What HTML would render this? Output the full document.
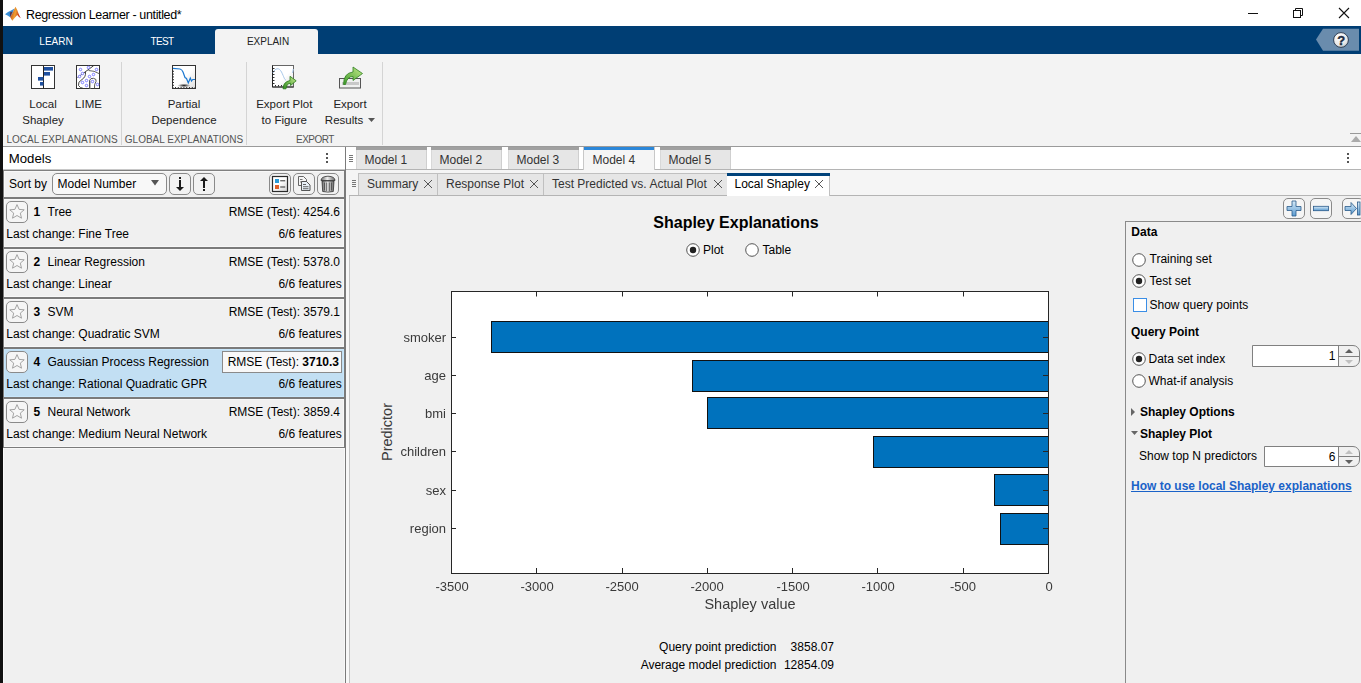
<!DOCTYPE html>
<html><head><meta charset="utf-8"><style>
html,body{margin:0;padding:0;width:1361px;height:683px;overflow:hidden;background:#f0f0f0;position:relative;}
body{font-family:"Liberation Sans",sans-serif;}
.a{position:absolute;display:block;}
.t{position:absolute;white-space:nowrap;font-family:"Liberation Sans",sans-serif;}
svg{overflow:visible}
</style></head><body>
<div class="a" style="left:0px;top:0px;width:1361px;height:26px;background:#fff"></div>
<svg class="a" style="left:0px;top:0px;" width="26" height="24" viewBox="0 0 26 24"><defs><linearGradient id="mlg" x1="0" y1="0" x2="1" y2="0.3"><stop offset="0" stop-color="#b0301a"/><stop offset="0.55" stop-color="#f0a030"/><stop offset="1" stop-color="#c02818"/></linearGradient></defs><path d="M5 14.3 Q8 11.5 11 10.5 Q13 9.5 14.5 8.6 L12.5 13.5 L10.2 17.3 Q7.5 15.5 5 14.3 Z" fill="#3a90d8"/><path d="M10.2 17.3 L13 12 L15.5 6.8 Q17.5 10 18.5 13.5 Q19.5 16 20.8 18.2 Q18.5 16.8 17.2 15 Q14.5 18 12.3 20.7 Z" fill="url(#mlg)"/><path d="M9.8 12.5 L12.5 11.5 L10.2 17.3 Z" fill="#6a1a20" opacity="0.8"/></svg>
<div class="t" style="left:26px;top:8px;font-size:12.5px;line-height:14px;color:#000;letter-spacing:-0.36px;">Regression Learner - untitled*</div>
<div class="a" style="left:1248px;top:13px;width:10px;height:1px;background:#111"></div>
<svg class="a" style="left:1292px;top:7px;" width="13" height="12" viewBox="0 0 13 12"><rect x="1.5" y="3.5" width="7" height="7" fill="none" stroke="#111" stroke-width="1"/><path d="M3.5 3.5 V1.5 H10.5 V8.5 H8.5" fill="none" stroke="#111" stroke-width="1"/></svg>
<svg class="a" style="left:1338px;top:7px;" width="12" height="12" viewBox="0 0 12 12"><path d="M1 1 L11 11 M11 1 L1 11" stroke="#111" stroke-width="1.1"/></svg>
<div class="a" style="left:0px;top:26px;width:1361px;height:28px;background:#003e74"></div>
<div class="t" style="left:56px;top:36px;font-size:10px;line-height:11px;color:#fff;transform:translateX(-50%);">LEARN</div>
<div class="t" style="left:162px;top:36px;font-size:10px;line-height:11px;color:#fff;transform:translateX(-50%);letter-spacing:-0.6px;">TEST</div>
<div class="a" style="left:215px;top:29px;width:103px;height:25px;background:#f3f3f3;border-radius:3px 3px 0 0"></div>
<div class="t" style="left:268px;top:36px;font-size:10px;line-height:11px;color:#222;transform:translateX(-50%);">EXPLAIN</div>
<svg class="a" style="left:1315px;top:28px;" width="46" height="23" viewBox="0 0 46 23"><path d="M1 11.5 L8 0.8 H44 V22.8 H8 Z" fill="#6a8cad"/><defs><radialGradient id="hg" cx="0.4" cy="0.3" r="0.8"><stop offset="0" stop-color="#fff"/><stop offset="0.7" stop-color="#e6e6e6"/><stop offset="1" stop-color="#9aa"/></radialGradient></defs><circle cx="26" cy="12" r="7.4" fill="url(#hg)" stroke="#22324a" stroke-width="0.9"/><text x="26.2" y="16.6" text-anchor="middle" font-family="Liberation Sans" font-weight="bold" font-size="13" fill="#1f2d40" stroke="#1f2d40" stroke-width="0.4">?</text></svg>
<div class="a" style="left:0px;top:54px;width:1361px;height:92px;background:#f3f3f3"></div>
<div class="a" style="left:0px;top:146px;width:1361px;height:1px;background:#9a9a9a"></div>
<div class="a" style="left:121px;top:62px;width:1px;height:83px;background:#d4d4d4"></div>
<div class="a" style="left:246px;top:62px;width:1px;height:83px;background:#d4d4d4"></div>
<div class="a" style="left:382px;top:62px;width:1px;height:83px;background:#d4d4d4"></div>
<svg class="a" style="left:31px;top:65px;" width="24" height="24" viewBox="0 0 24 24"><rect x="0.5" y="0.5" width="23" height="23" fill="#fff" stroke="#333"/><line x1="12.5" y1="0.5" x2="12.5" y2="23.5" stroke="#222"/><rect x="13" y="2" width="9" height="3.6" fill="#1f50a0"/><rect x="13" y="7" width="6" height="3.6" fill="#1f50a0"/><rect x="7" y="12" width="5.5" height="3.6" fill="#1f50a0"/><rect x="9" y="17" width="3.5" height="3.6" fill="#1f50a0"/></svg>
<svg class="a" style="left:76px;top:65px;" width="24" height="24" viewBox="0 0 24 24"><rect x="0.5" y="0.5" width="23" height="23" fill="#fff" stroke="#333"/><path d="M1.5 12.5 L17.5 0.8" stroke="#2a2a2a" stroke-width="0.9" fill="none"/><path d="M12.5 5.5 Q18 5.5 23.5 8.8" stroke="#555" stroke-width="0.9" fill="none"/><path d="M9.5 7 Q10 12 6 14.5 Q1.5 17 2.5 20.5 Q4 23 7.5 23.5" stroke="#333" stroke-width="0.9" fill="none"/><path d="M14 23.5 V15.5" stroke="#aaa" stroke-width="1.6" fill="none"/><path d="M13.5 23.5 V15.5 Q14.5 12.8 17.5 13.3 Q21 14 20 16.5 Q18 19 18.5 23.5" stroke="#444" stroke-width="0.9" fill="none"/><circle cx="4.5" cy="4.5" r="1.25" fill="#fff" stroke="#7070ff" stroke-width="0.9"/><circle cx="12.5" cy="2.5" r="1.25" fill="#fff" stroke="#7070ff" stroke-width="0.9"/><circle cx="20.5" cy="4.5" r="1.25" fill="#fff" stroke="#7070ff" stroke-width="0.9"/><circle cx="6.5" cy="8.5" r="1.25" fill="#fff" stroke="#7070ff" stroke-width="0.9"/><circle cx="3.5" cy="11.5" r="1.25" fill="#fff" stroke="#7070ff" stroke-width="0.9"/><circle cx="17.5" cy="9.5" r="1.25" fill="#fff" stroke="#7070ff" stroke-width="0.9"/><circle cx="13.5" cy="11.5" r="1.25" fill="#fff" stroke="#7070ff" stroke-width="0.9"/><circle cx="10.5" cy="15.5" r="1.25" fill="#fff" stroke="#7070ff" stroke-width="0.9"/><circle cx="16.5" cy="16.5" r="1.25" fill="#fff" stroke="#7070ff" stroke-width="0.9"/><circle cx="6.5" cy="17.5" r="1.25" fill="#fff" stroke="#7070ff" stroke-width="0.9"/><circle cx="10.5" cy="20.5" r="1.25" fill="#fff" stroke="#7070ff" stroke-width="0.9"/><circle cx="21.5" cy="19.5" r="1.25" fill="#fff" stroke="#7070ff" stroke-width="0.9"/></svg>
<svg class="a" style="left:172px;top:65px;" width="24" height="24" viewBox="0 0 24 24"><defs><linearGradient id="pdg" x1="0" y1="0" x2="1" y2="1"><stop offset="0.5" stop-color="#fff"/><stop offset="1" stop-color="#ddd"/></linearGradient></defs><rect x="0.5" y="0.5" width="23" height="23" fill="url(#pdg)" stroke="#333"/><defs><radialGradient id="pds" cx="0.5" cy="0.5" r="0.5"><stop offset="0" stop-color="#222"/><stop offset="1" stop-color="#222" stop-opacity="0"/></radialGradient></defs><ellipse cx="12" cy="20.5" rx="6.5" ry="1.8" fill="url(#pds)"/><rect x="1" y="3.0" width="1" height="1" fill="#333"/><rect x="3.0" y="22" width="1" height="1" fill="#333"/><rect x="1" y="5.8" width="1" height="1" fill="#333"/><rect x="5.8" y="22" width="1" height="1" fill="#333"/><rect x="1" y="8.6" width="1" height="1" fill="#333"/><rect x="8.6" y="22" width="1" height="1" fill="#333"/><rect x="1" y="11.4" width="1" height="1" fill="#333"/><rect x="11.4" y="22" width="1" height="1" fill="#333"/><rect x="1" y="14.2" width="1" height="1" fill="#333"/><rect x="14.2" y="22" width="1" height="1" fill="#333"/><rect x="1" y="17.0" width="1" height="1" fill="#333"/><rect x="17.0" y="22" width="1" height="1" fill="#333"/><rect x="1" y="19.8" width="1" height="1" fill="#333"/><rect x="19.8" y="22" width="1" height="1" fill="#333"/><rect x="1" y="22.6" width="1" height="1" fill="#333"/><rect x="22.6" y="22" width="1" height="1" fill="#333"/><path d="M1 3.3 L8 4 Q10 4.5 11 7 L13 12.5 L14.5 13.5 L16.3 18 L18.3 13 L19.5 16 L20.7 14.5 L23 14.5" fill="none" stroke="#1c78d0" stroke-width="1.2"/></svg>
<svg class="a" style="left:272px;top:65px;" width="25" height="25" viewBox="0 0 25 25"><defs><linearGradient id="epg" x1="0" y1="0" x2="1" y2="1"><stop offset="0.55" stop-color="#fff"/><stop offset="1" stop-color="#dcdcdc"/></linearGradient><linearGradient id="gr" x1="0" y1="1" x2="1" y2="0"><stop offset="0" stop-color="#2f8a1f"/><stop offset="1" stop-color="#c8ee90"/></linearGradient></defs><rect x="0.5" y="0.5" width="21" height="21.5" fill="url(#epg)" stroke="#666" stroke-width="1"/><path d="M0.5 0.5 V22 H21.5" fill="none" stroke="#222" stroke-width="1"/><path d="M1 8 C3 3, 7 2, 9.5 7 S 12.5 15, 14 15" fill="none" stroke="#a8c8ea" stroke-width="1"/><path d="M20.5 8 Q21 6 21.3 4" fill="none" stroke="#a8c8ea" stroke-width="1"/><rect x="1" y="3" width="1.5" height="1" fill="#333"/><rect x="1" y="6" width="1.5" height="1" fill="#333"/><rect x="1" y="9" width="1.5" height="1" fill="#333"/><rect x="1" y="12" width="1.5" height="1" fill="#333"/><rect x="1" y="15" width="1.5" height="1" fill="#333"/><rect x="1" y="18" width="1.5" height="1" fill="#333"/><rect x="3" y="20" width="1" height="1.5" fill="#333"/><rect x="6" y="20" width="1" height="1.5" fill="#333"/><rect x="9" y="20" width="1" height="1.5" fill="#333"/><rect x="12" y="20" width="1" height="1.5" fill="#333"/><path d="M11 23.8 Q11 17 18 15.5 L18 11.3 L24.2 15.8 L18.5 20.5 L18.5 18.2 Q14.5 18.5 14 23.8 Z" fill="url(#gr)" stroke="#2a7a1a" stroke-width="0.8"/></svg>
<svg class="a" style="left:339px;top:64px;" width="25" height="26" viewBox="0 0 25 26"><defs><linearGradient id="gr2" x1="0" y1="1" x2="1" y2="0"><stop offset="0" stop-color="#3d9a2a"/><stop offset="1" stop-color="#c5ea8a"/></linearGradient></defs><rect x="0.5" y="14.5" width="21" height="9.5" fill="#f0f0f0" stroke="#555"/><rect x="3" y="18" width="17" height="3" fill="#c8c8c8"/><path d="M4.5 20.5 Q4.5 9 14 8 L14 3 L23.5 9.5 L14 16.5 L14 12.5 Q8 12.5 6.5 20.5 Z" fill="url(#gr2)" stroke="#2f7f1f" stroke-width="0.8"/></svg>
<div class="t" style="left:43px;top:98px;font-size:11.5px;line-height:12px;color:#222;transform:translateX(-50%);">Local</div>
<div class="t" style="left:43px;top:114px;font-size:11.5px;line-height:12px;color:#222;transform:translateX(-50%);">Shapley</div>
<div class="t" style="left:88.5px;top:98px;font-size:11.5px;line-height:12px;color:#222;transform:translateX(-50%);">LIME</div>
<div class="t" style="left:184px;top:98px;font-size:11.5px;line-height:12px;color:#222;transform:translateX(-50%);">Partial</div>
<div class="t" style="left:184px;top:114px;font-size:11.5px;line-height:12px;color:#222;transform:translateX(-50%);">Dependence</div>
<div class="t" style="left:284.3px;top:98px;font-size:11.5px;line-height:12px;color:#222;transform:translateX(-50%);">Export Plot</div>
<div class="t" style="left:284.3px;top:114px;font-size:11.5px;line-height:12px;color:#222;transform:translateX(-50%);">to Figure</div>
<div class="t" style="left:350px;top:98px;font-size:11.5px;line-height:12px;color:#222;transform:translateX(-50%);">Export</div>
<div class="t" style="left:344px;top:114px;font-size:11.5px;line-height:12px;color:#222;transform:translateX(-50%);">Results</div>
<svg class="a" style="left:368px;top:118px;" width="8" height="5" viewBox="0 0 8 5"><path d="M0 0 H7 L3.5 4 Z" fill="#555"/></svg>
<div class="t" style="left:62px;top:134px;font-size:10px;line-height:11px;color:#555;transform:translateX(-50%);">LOCAL EXPLANATIONS</div>
<div class="t" style="left:184px;top:134px;font-size:10px;line-height:11px;color:#555;transform:translateX(-50%);">GLOBAL EXPLANATIONS</div>
<div class="t" style="left:315px;top:134px;font-size:10px;line-height:11px;color:#555;transform:translateX(-50%);letter-spacing:-0.5px;">EXPORT</div>
<div class="a" style="left:1350px;top:133px;width:11px;height:1px;background:#999"></div>
<svg class="a" style="left:1350px;top:135px;" width="11" height="7" viewBox="0 0 11 7"><path d="M1 7 L6 1 L11 7 Z" fill="#aaa"/></svg>
<div class="a" style="left:3px;top:147px;width:342px;height:22px;background:#fff"></div>
<div class="a" style="left:0px;top:147px;width:3px;height:536px;background:#111"></div>
<div class="a" style="left:0px;top:0px;width:3px;height:147px;background:#111"></div>
<div class="t" style="left:8.8px;top:151px;font-size:13.2px;line-height:15px;color:#000;">Models</div>
<div class="a" style="left:326px;top:153px;width:2.2px;height:2.2px;background:#555"></div>
<div class="a" style="left:326px;top:157px;width:2.2px;height:2.2px;background:#555"></div>
<div class="a" style="left:326px;top:161px;width:2.2px;height:2.2px;background:#555"></div>
<div class="a" style="left:3px;top:169px;width:342px;height:1px;background:#c8c8c8"></div>
<div class="a" style="left:3px;top:170px;width:342px;height:513px;background:#f0f0f0"></div>
<div class="a" style="left:3px;top:170px;width:342px;height:1px;background:#808080"></div>
<div class="a" style="left:4px;top:171px;width:340px;height:1px;background:#f8f8f8"></div>
<div class="a" style="left:4px;top:171px;width:1px;height:26px;background:#f8f8f8"></div>
<div class="a" style="left:3px;top:170px;width:1px;height:278px;background:#7b7b7b"></div>
<div class="a" style="left:3px;top:448px;width:1px;height:235px;background:#fafafa"></div>
<div class="a" style="left:344px;top:170px;width:1px;height:278px;background:#7b7b7b"></div>
<div class="a" style="left:344px;top:448px;width:1px;height:235px;background:#f8f8f8"></div>
<div class="a" style="left:4px;top:448px;width:340px;height:1px;background:#f8f8f8"></div>
<div class="a" style="left:345px;top:147px;width:1px;height:536px;background:#7b7b7b"></div>
<div class="t" style="left:9px;top:177px;font-size:12px;line-height:14px;color:#000;">Sort by</div>
<div class="a" style="left:52px;top:173px;width:115px;height:22px;background:#f8f8f8;border:1px solid #8a8a8a;border-radius:5px;box-sizing:border-box"></div>
<div class="t" style="left:57.5px;top:177px;font-size:12px;line-height:14px;color:#000;">Model Number</div>
<svg class="a" style="left:151px;top:180px;" width="8" height="6" viewBox="0 0 8 6"><path d="M0 0 H8 L4 5.5 Z" fill="#555"/></svg>
<div class="a" style="left:169px;top:173px;width:22px;height:22px;background:#f2f2f2;border:1px solid #8a8a8a;border-radius:5px;box-sizing:border-box"></div>
<div class="a" style="left:193px;top:173px;width:22px;height:22px;background:#f2f2f2;border:1px solid #8a8a8a;border-radius:5px;box-sizing:border-box"></div>
<svg class="a" style="left:169px;top:173px;" width="22" height="22" viewBox="0 0 22 22"><rect x="10" y="4" width="2" height="2" fill="#1a1a1a"/><rect x="10" y="7" width="2" height="8" fill="#1a1a1a"/><path d="M7 14 H15 L11 18 Z" fill="#1a1a1a"/></svg>
<svg class="a" style="left:193px;top:173px;" width="22" height="22" viewBox="0 0 22 22"><rect x="10" y="16" width="2" height="2" fill="#1a1a1a"/><rect x="10" y="7.5" width="2" height="7.5" fill="#1a1a1a"/><path d="M7 8 H15 L11 4 Z" fill="#1a1a1a"/></svg>
<div class="a" style="left:269px;top:173px;width:22px;height:22px;background:#f2f2f2;border:1px solid #8a8a8a;border-radius:5px;box-sizing:border-box"></div>
<div class="a" style="left:293px;top:173px;width:22px;height:22px;background:#f2f2f2;border:1px solid #8a8a8a;border-radius:5px;box-sizing:border-box"></div>
<div class="a" style="left:317px;top:173px;width:22px;height:22px;background:#f2f2f2;border:1px solid #8a8a8a;border-radius:5px;box-sizing:border-box"></div>
<svg class="a" style="left:269px;top:173px;" width="22" height="22" viewBox="0 0 22 22"><defs><linearGradient id="lg1" x1="0" y1="0" x2="1" y2="1"><stop offset="0.45" stop-color="#fff"/><stop offset="1" stop-color="#d0d0d0"/></linearGradient></defs><rect x="3.5" y="3.5" width="15" height="15" fill="url(#lg1)" stroke="#2a2a2a" stroke-width="1.2"/><rect x="6" y="6" width="4" height="4" fill="#2a9ad6"/><rect x="6" y="12" width="4" height="4" fill="#e0602a"/><rect x="11.2" y="7.3" width="5" height="1" fill="#333"/><rect x="11.2" y="13.5" width="5" height="1" fill="#333"/></svg>
<svg class="a" style="left:293px;top:173px;" width="22" height="22" viewBox="0 0 22 22"><path d="M5.5 3.5 H10.5 L13.5 6.5 V12.5 H5.5 Z" fill="#f6f6f6" stroke="#555" stroke-width="0.9"/><rect x="7" y="6" width="2.5" height="0.9" fill="#666"/><rect x="7" y="8.5" width="4" height="0.9" fill="#666"/><path d="M8.5 8.5 H13.5 L17 12 V17.5 H8.5 Z" fill="#e8f0f8" stroke="#444" stroke-width="0.9"/><rect x="10" y="11" width="3" height="0.9" fill="#555"/><rect x="10" y="13.3" width="5.5" height="0.9" fill="#555"/><rect x="10" y="15.3" width="5.5" height="0.9" fill="#555"/></svg>
<svg class="a" style="left:317px;top:173px;" width="22" height="22" viewBox="0 0 22 22"><defs><linearGradient id="tg" x1="0" y1="0" x2="1" y2="0"><stop offset="0" stop-color="#666"/><stop offset="0.45" stop-color="#f0f0f0"/><stop offset="1" stop-color="#666"/></linearGradient></defs><path d="M4 7.5 Q4 3.5 11 3.2 Q18 3.5 18 7.5 Z" fill="url(#tg)" stroke="#333" stroke-width="0.8"/><path d="M5 8 H17 L16.3 18.5 Q11 19.7 5.7 18.5 Z" fill="url(#tg)" stroke="#333" stroke-width="0.8"/><path d="M7.5 9.5 V17.5 M9.7 9.5 V18 M12.3 9.5 V18 M14.5 9.5 V17.5" stroke="#444" stroke-width="0.8"/></svg>
<div class="a" style="left:3px;top:197px;width:341px;height:1px;background:#7b7b7b"></div>
<div class="a" style="left:4px;top:199px;width:340px;height:48px;background:#f0f0f0"></div>
<div class="a" style="left:4px;top:199px;width:340px;height:1px;background:#f8f8f8"></div>
<div class="a" style="left:4px;top:246px;width:340px;height:1px;background:#f8f8f8"></div>
<div class="a" style="left:4px;top:199px;width:1px;height:48px;background:#f8f8f8"></div>
<div class="a" style="left:343px;top:199px;width:1px;height:48px;background:#f8f8f8"></div>
<div class="a" style="left:6px;top:201px;width:22px;height:21.5px;background:#f5f5f5;border:1px solid #8a8a8a;border-radius:5px;box-sizing:border-box"></div>
<svg class="a" style="left:6px;top:201px;" width="22" height="22" viewBox="0 0 22 22"><path d="M11 3.6 L13.1 8.4 L18.2 8.8 L14.3 12.1 L15.5 17.2 L11 14.5 L6.5 17.2 L7.7 12.1 L3.8 8.8 L8.9 8.4 Z" fill="#f8f8f8" stroke="#9a9a9a" stroke-width="0.9"/></svg>
<div class="t" style="left:33.5px;top:205px;font-size:12px;line-height:14px;color:#000;font-weight:bold;">1</div>
<div class="t" style="left:47.5px;top:205px;font-size:12px;line-height:14px;color:#000;">Tree</div>
<div class="t" style="left:6.3px;top:227px;font-size:12px;line-height:14px;color:#000;">Last change: Fine Tree</div>
<div class="t" style="left:340px;top:205px;font-size:12px;line-height:14px;color:#000;transform:translateX(-100%);">RMSE (Test): 4254.6</div>
<div class="t" style="left:341.8px;top:227px;font-size:12px;line-height:14px;color:#000;transform:translateX(-100%);">6/6 features</div>
<div class="a" style="left:3px;top:198px;width:341px;height:1px;background:#7b7b7b"></div>
<div class="a" style="left:3px;top:247px;width:341px;height:1px;background:#7b7b7b"></div>
<div class="a" style="left:4px;top:249px;width:340px;height:48px;background:#f0f0f0"></div>
<div class="a" style="left:4px;top:249px;width:340px;height:1px;background:#f8f8f8"></div>
<div class="a" style="left:4px;top:296px;width:340px;height:1px;background:#f8f8f8"></div>
<div class="a" style="left:4px;top:249px;width:1px;height:48px;background:#f8f8f8"></div>
<div class="a" style="left:343px;top:249px;width:1px;height:48px;background:#f8f8f8"></div>
<div class="a" style="left:6px;top:251px;width:22px;height:21.5px;background:#f5f5f5;border:1px solid #8a8a8a;border-radius:5px;box-sizing:border-box"></div>
<svg class="a" style="left:6px;top:251px;" width="22" height="22" viewBox="0 0 22 22"><path d="M11 3.6 L13.1 8.4 L18.2 8.8 L14.3 12.1 L15.5 17.2 L11 14.5 L6.5 17.2 L7.7 12.1 L3.8 8.8 L8.9 8.4 Z" fill="#f8f8f8" stroke="#9a9a9a" stroke-width="0.9"/></svg>
<div class="t" style="left:33.5px;top:255px;font-size:12px;line-height:14px;color:#000;font-weight:bold;">2</div>
<div class="t" style="left:47.5px;top:255px;font-size:12px;line-height:14px;color:#000;">Linear Regression</div>
<div class="t" style="left:6.3px;top:277px;font-size:12px;line-height:14px;color:#000;">Last change: Linear</div>
<div class="t" style="left:340px;top:255px;font-size:12px;line-height:14px;color:#000;transform:translateX(-100%);">RMSE (Test): 5378.0</div>
<div class="t" style="left:341.8px;top:277px;font-size:12px;line-height:14px;color:#000;transform:translateX(-100%);">6/6 features</div>
<div class="a" style="left:3px;top:248px;width:341px;height:1px;background:#7b7b7b"></div>
<div class="a" style="left:3px;top:297px;width:341px;height:1px;background:#7b7b7b"></div>
<div class="a" style="left:4px;top:299px;width:340px;height:48px;background:#f0f0f0"></div>
<div class="a" style="left:4px;top:299px;width:340px;height:1px;background:#f8f8f8"></div>
<div class="a" style="left:4px;top:346px;width:340px;height:1px;background:#f8f8f8"></div>
<div class="a" style="left:4px;top:299px;width:1px;height:48px;background:#f8f8f8"></div>
<div class="a" style="left:343px;top:299px;width:1px;height:48px;background:#f8f8f8"></div>
<div class="a" style="left:6px;top:301px;width:22px;height:21.5px;background:#f5f5f5;border:1px solid #8a8a8a;border-radius:5px;box-sizing:border-box"></div>
<svg class="a" style="left:6px;top:301px;" width="22" height="22" viewBox="0 0 22 22"><path d="M11 3.6 L13.1 8.4 L18.2 8.8 L14.3 12.1 L15.5 17.2 L11 14.5 L6.5 17.2 L7.7 12.1 L3.8 8.8 L8.9 8.4 Z" fill="#f8f8f8" stroke="#9a9a9a" stroke-width="0.9"/></svg>
<div class="t" style="left:33.5px;top:305px;font-size:12px;line-height:14px;color:#000;font-weight:bold;">3</div>
<div class="t" style="left:47.5px;top:305px;font-size:12px;line-height:14px;color:#000;">SVM</div>
<div class="t" style="left:6.3px;top:327px;font-size:12px;line-height:14px;color:#000;">Last change: Quadratic SVM</div>
<div class="t" style="left:340px;top:305px;font-size:12px;line-height:14px;color:#000;transform:translateX(-100%);">RMSE (Test): 3579.1</div>
<div class="t" style="left:341.8px;top:327px;font-size:12px;line-height:14px;color:#000;transform:translateX(-100%);">6/6 features</div>
<div class="a" style="left:3px;top:298px;width:341px;height:1px;background:#7b7b7b"></div>
<div class="a" style="left:3px;top:347px;width:341px;height:1px;background:#7b7b7b"></div>
<div class="a" style="left:4px;top:349px;width:340px;height:48px;background:#c2dff3"></div>
<div class="a" style="left:4px;top:349px;width:340px;height:1px;background:#c9e7fb"></div>
<div class="a" style="left:4px;top:396px;width:340px;height:1px;background:#c9e7fb"></div>
<div class="a" style="left:4px;top:349px;width:1px;height:48px;background:#c9e7fb"></div>
<div class="a" style="left:343px;top:349px;width:1px;height:48px;background:#c9e7fb"></div>
<div class="a" style="left:6px;top:351px;width:22px;height:21.5px;background:#f5f5f5;border:1px solid #8a8a8a;border-radius:5px;box-sizing:border-box"></div>
<svg class="a" style="left:6px;top:351px;" width="22" height="22" viewBox="0 0 22 22"><path d="M11 3.6 L13.1 8.4 L18.2 8.8 L14.3 12.1 L15.5 17.2 L11 14.5 L6.5 17.2 L7.7 12.1 L3.8 8.8 L8.9 8.4 Z" fill="#f8f8f8" stroke="#9a9a9a" stroke-width="0.9"/></svg>
<div class="t" style="left:33.5px;top:355px;font-size:12px;line-height:14px;color:#000;font-weight:bold;">4</div>
<div class="t" style="left:47.5px;top:355px;font-size:12px;line-height:14px;color:#000;">Gaussian Process Regression</div>
<div class="t" style="left:6.3px;top:377px;font-size:12px;line-height:14px;color:#000;">Last change: Rational Quadratic GPR</div>
<div class="a" style="left:222px;top:351px;width:120px;height:22px;background:#f8f8f8;border:1px solid #8a8a8a;box-sizing:border-box"></div>
<div class="t" style="left:339px;top:355px;font-size:12px;line-height:14px;color:#000;transform:translateX(-100%);">RMSE (Test): <b>3710.3</b></div>
<div class="t" style="left:341.8px;top:377px;font-size:12px;line-height:14px;color:#000;transform:translateX(-100%);">6/6 features</div>
<div class="a" style="left:3px;top:348px;width:341px;height:1px;background:#7b7b7b"></div>
<div class="a" style="left:3px;top:397px;width:341px;height:1px;background:#7b7b7b"></div>
<div class="a" style="left:4px;top:399px;width:340px;height:48px;background:#f0f0f0"></div>
<div class="a" style="left:4px;top:399px;width:340px;height:1px;background:#f8f8f8"></div>
<div class="a" style="left:4px;top:446px;width:340px;height:1px;background:#f8f8f8"></div>
<div class="a" style="left:4px;top:399px;width:1px;height:48px;background:#f8f8f8"></div>
<div class="a" style="left:343px;top:399px;width:1px;height:48px;background:#f8f8f8"></div>
<div class="a" style="left:6px;top:401px;width:22px;height:21.5px;background:#f5f5f5;border:1px solid #8a8a8a;border-radius:5px;box-sizing:border-box"></div>
<svg class="a" style="left:6px;top:401px;" width="22" height="22" viewBox="0 0 22 22"><path d="M11 3.6 L13.1 8.4 L18.2 8.8 L14.3 12.1 L15.5 17.2 L11 14.5 L6.5 17.2 L7.7 12.1 L3.8 8.8 L8.9 8.4 Z" fill="#f8f8f8" stroke="#9a9a9a" stroke-width="0.9"/></svg>
<div class="t" style="left:33.5px;top:405px;font-size:12px;line-height:14px;color:#000;font-weight:bold;">5</div>
<div class="t" style="left:47.5px;top:405px;font-size:12px;line-height:14px;color:#000;">Neural Network</div>
<div class="t" style="left:6.3px;top:427px;font-size:12px;line-height:14px;color:#000;">Last change: Medium Neural Network</div>
<div class="t" style="left:340px;top:405px;font-size:12px;line-height:14px;color:#000;transform:translateX(-100%);">RMSE (Test): 3859.4</div>
<div class="t" style="left:341.8px;top:427px;font-size:12px;line-height:14px;color:#000;transform:translateX(-100%);">6/6 features</div>
<div class="a" style="left:3px;top:398px;width:341px;height:1px;background:#7b7b7b"></div>
<div class="a" style="left:3px;top:447px;width:341px;height:1px;background:#7b7b7b"></div>
<div class="a" style="left:346px;top:147px;width:1015px;height:536px;background:#f0f0f0"></div>
<div class="a" style="left:346px;top:147px;width:1015px;height:22px;background:#fff"></div>
<div class="a" style="left:346px;top:169px;width:1015px;height:1px;background:#b4b4b4"></div>
<div class="a" style="left:346px;top:170px;width:1015px;height:26px;background:#f5f5f5"></div>
<div class="a" style="left:349px;top:195px;width:1012px;height:1px;background:#b4b4b4"></div>
<div class="a" style="left:346px;top:196px;width:3px;height:487px;background:#f8f8f8"></div>
<div class="a" style="left:349px;top:196px;width:1px;height:487px;background:#c4c4c4"></div>
<div class="a" style="left:349px;top:154.5px;width:4px;height:1px;background:#777"></div>
<div class="a" style="left:352px;top:180px;width:4px;height:1px;background:#777"></div>
<div class="a" style="left:349px;top:156.5px;width:4px;height:1px;background:#777"></div>
<div class="a" style="left:352px;top:182px;width:4px;height:1px;background:#777"></div>
<div class="a" style="left:349px;top:158.5px;width:4px;height:1px;background:#777"></div>
<div class="a" style="left:352px;top:184px;width:4px;height:1px;background:#777"></div>
<div class="a" style="left:349px;top:160.5px;width:4px;height:1px;background:#777"></div>
<div class="a" style="left:352px;top:186px;width:4px;height:1px;background:#777"></div>
<div class="a" style="left:356px;top:147px;width:71px;height:22px;background:#e6e6e6;border-right:1px solid #cfcfcf;border-left:1px solid #d8d8d8;box-sizing:border-box"></div>
<div class="a" style="left:356px;top:147px;width:71px;height:3px;background:#a0a0a0"></div>
<div class="t" style="left:364.5px;top:153px;font-size:12px;line-height:14px;color:#333;">Model 1</div>
<div class="a" style="left:431px;top:147px;width:71px;height:22px;background:#e6e6e6;border-right:1px solid #cfcfcf;border-left:1px solid #d8d8d8;box-sizing:border-box"></div>
<div class="a" style="left:431px;top:147px;width:71px;height:3px;background:#a0a0a0"></div>
<div class="t" style="left:439.5px;top:153px;font-size:12px;line-height:14px;color:#333;">Model 2</div>
<div class="a" style="left:508px;top:147px;width:71px;height:22px;background:#e6e6e6;border-right:1px solid #cfcfcf;border-left:1px solid #d8d8d8;box-sizing:border-box"></div>
<div class="a" style="left:508px;top:147px;width:71px;height:3px;background:#a0a0a0"></div>
<div class="t" style="left:516.5px;top:153px;font-size:12px;line-height:14px;color:#333;">Model 3</div>
<div class="a" style="left:583px;top:147px;width:72px;height:23px;background:#f5f5f5;border-left:1px solid #c8c8c8;border-right:1px solid #c8c8c8;box-sizing:border-box"></div>
<div class="a" style="left:584px;top:147px;width:70px;height:3px;background:#2b87d9"></div>
<div class="t" style="left:592.5px;top:153px;font-size:12px;line-height:14px;color:#333;">Model 4</div>
<div class="a" style="left:660px;top:147px;width:71px;height:22px;background:#e6e6e6;border-right:1px solid #cfcfcf;border-left:1px solid #d8d8d8;box-sizing:border-box"></div>
<div class="a" style="left:660px;top:147px;width:71px;height:3px;background:#a0a0a0"></div>
<div class="t" style="left:668.5px;top:153px;font-size:12px;line-height:14px;color:#333;">Model 5</div>
<div class="a" style="left:1347px;top:153px;width:2.2px;height:2.2px;background:#555"></div>
<div class="a" style="left:1347px;top:157px;width:2.2px;height:2.2px;background:#555"></div>
<div class="a" style="left:1347px;top:161px;width:2.2px;height:2.2px;background:#555"></div>
<div class="a" style="left:358px;top:173px;width:79px;height:22px;background:#e6e6e6;border-left:1px solid #c0c0c0;border-top:1px solid #c0c0c0;box-sizing:border-box"></div>
<div class="t" style="left:367px;top:177px;font-size:12px;line-height:14px;color:#333;">Summary</div>
<svg class="a" style="left:423px;top:179px;" width="10" height="10" viewBox="0 0 10 10"><path d="M1 1 L9 9 M9 1 L1 9" stroke="#555" stroke-width="1"/></svg>
<div class="a" style="left:437px;top:173px;width:106px;height:22px;background:#e6e6e6;border-left:1px solid #c0c0c0;border-top:1px solid #c0c0c0;box-sizing:border-box"></div>
<div class="t" style="left:446px;top:177px;font-size:12px;line-height:14px;color:#333;">Response Plot</div>
<svg class="a" style="left:529px;top:179px;" width="10" height="10" viewBox="0 0 10 10"><path d="M1 1 L9 9 M9 1 L1 9" stroke="#555" stroke-width="1"/></svg>
<div class="a" style="left:543px;top:173px;width:184px;height:22px;background:#e6e6e6;border-left:1px solid #c0c0c0;border-top:1px solid #c0c0c0;box-sizing:border-box"></div>
<div class="t" style="left:552px;top:177px;font-size:12px;line-height:14px;color:#333;">Test Predicted vs. Actual Plot</div>
<svg class="a" style="left:713px;top:179px;" width="10" height="10" viewBox="0 0 10 10"><path d="M1 1 L9 9 M9 1 L1 9" stroke="#555" stroke-width="1"/></svg>
<div class="a" style="left:727px;top:173px;width:103px;height:23px;background:#fff;border-right:1px solid #c0c0c0;box-sizing:border-box"></div>
<div class="a" style="left:727px;top:173px;width:103px;height:3px;background:#00427a"></div>
<div class="t" style="left:734.5px;top:177px;font-size:12px;line-height:14px;color:#000;">Local Shapley</div>
<svg class="a" style="left:814px;top:179px;" width="10" height="10" viewBox="0 0 10 10"><path d="M1 1 L9 9 M9 1 L1 9" stroke="#555" stroke-width="1"/></svg>
<div class="t" style="left:736px;top:214px;font-size:16px;line-height:17px;color:#000;font-weight:bold;transform:translateX(-50%);">Shapley Explanations</div>
<svg class="a" style="left:686px;top:243px;" width="14" height="14" viewBox="0 0 14 14"><circle cx="7" cy="7" r="6.3" fill="#fff" stroke="#555" stroke-width="1"/><circle cx="7" cy="7" r="3.2" fill="#222"/></svg>
<div class="t" style="left:703px;top:243px;font-size:12px;line-height:14px;color:#000;">Plot</div>
<svg class="a" style="left:745px;top:243px;" width="14" height="14" viewBox="0 0 14 14"><circle cx="7" cy="7" r="6.3" fill="#fff" stroke="#555" stroke-width="1"/></svg>
<div class="t" style="left:762.5px;top:243px;font-size:12px;line-height:14px;color:#000;">Table</div>
<div class="a" style="left:451px;top:291px;width:597px;height:282px;background:#fff"></div>
<svg class="a" style="left:451px;top:291px;" width="599" height="284" viewBox="0 0 599 284"><rect x="0.5" y="0.5" width="597" height="282" fill="none" stroke="#262626" stroke-width="1"/></svg>
<svg class="a" style="left:451px;top:291px;" width="599" height="284" viewBox="0 0 599 284"><rect x="40.5" y="30.5" width="557" height="31" fill="#0072bd" stroke="#111" stroke-width="1"/><rect x="241.5" y="69.5" width="356" height="31" fill="#0072bd" stroke="#111" stroke-width="1"/><rect x="256.5" y="106.5" width="341" height="31" fill="#0072bd" stroke="#111" stroke-width="1"/><rect x="422.5" y="145.5" width="175" height="31" fill="#0072bd" stroke="#111" stroke-width="1"/><rect x="543.5" y="183.5" width="54" height="31" fill="#0072bd" stroke="#111" stroke-width="1"/><rect x="549.5" y="222.5" width="48" height="31" fill="#0072bd" stroke="#111" stroke-width="1"/><line x1="0" y1="46.5" x2="5" y2="46.5" stroke="#262626"/><line x1="592" y1="46.5" x2="597" y2="46.5" stroke="#262626"/><line x1="0" y1="84.5" x2="5" y2="84.5" stroke="#262626"/><line x1="592" y1="84.5" x2="597" y2="84.5" stroke="#262626"/><line x1="0" y1="122.5" x2="5" y2="122.5" stroke="#262626"/><line x1="592" y1="122.5" x2="597" y2="122.5" stroke="#262626"/><line x1="0" y1="160.5" x2="5" y2="160.5" stroke="#262626"/><line x1="592" y1="160.5" x2="597" y2="160.5" stroke="#262626"/><line x1="0" y1="199.5" x2="5" y2="199.5" stroke="#262626"/><line x1="592" y1="199.5" x2="597" y2="199.5" stroke="#262626"/><line x1="0" y1="237.5" x2="5" y2="237.5" stroke="#262626"/><line x1="592" y1="237.5" x2="597" y2="237.5" stroke="#262626"/><line x1="0.5" y1="0" x2="0.5" y2="5.5" stroke="#262626"/><line x1="0.5" y1="277" x2="0.5" y2="282" stroke="#262626"/><line x1="85.5" y1="0" x2="85.5" y2="5.5" stroke="#262626"/><line x1="85.5" y1="277" x2="85.5" y2="282" stroke="#262626"/><line x1="171.5" y1="0" x2="171.5" y2="5.5" stroke="#262626"/><line x1="171.5" y1="277" x2="171.5" y2="282" stroke="#262626"/><line x1="256.5" y1="0" x2="256.5" y2="5.5" stroke="#262626"/><line x1="256.5" y1="277" x2="256.5" y2="282" stroke="#262626"/><line x1="341.5" y1="0" x2="341.5" y2="5.5" stroke="#262626"/><line x1="341.5" y1="277" x2="341.5" y2="282" stroke="#262626"/><line x1="426.5" y1="0" x2="426.5" y2="5.5" stroke="#262626"/><line x1="426.5" y1="277" x2="426.5" y2="282" stroke="#262626"/><line x1="512.5" y1="0" x2="512.5" y2="5.5" stroke="#262626"/><line x1="512.5" y1="277" x2="512.5" y2="282" stroke="#262626"/><line x1="597.5" y1="0" x2="597.5" y2="5.5" stroke="#262626"/><line x1="597.5" y1="277" x2="597.5" y2="282" stroke="#262626"/><rect x="0.5" y="0.5" width="597" height="282" fill="none" stroke="#262626" stroke-width="1"/></svg>
<div class="t" style="left:446px;top:330px;font-size:13px;line-height:15px;color:#3a3a3a;transform:translateX(-100%);will-change:transform;">smoker</div>
<div class="t" style="left:446px;top:368px;font-size:13px;line-height:15px;color:#3a3a3a;transform:translateX(-100%);will-change:transform;">age</div>
<div class="t" style="left:446px;top:406px;font-size:13px;line-height:15px;color:#3a3a3a;transform:translateX(-100%);will-change:transform;">bmi</div>
<div class="t" style="left:446px;top:444px;font-size:13px;line-height:15px;color:#3a3a3a;transform:translateX(-100%);will-change:transform;">children</div>
<div class="t" style="left:446px;top:483px;font-size:13px;line-height:15px;color:#3a3a3a;transform:translateX(-100%);will-change:transform;">sex</div>
<div class="t" style="left:446px;top:521px;font-size:13px;line-height:15px;color:#3a3a3a;transform:translateX(-100%);will-change:transform;">region</div>
<div class="t" style="left:451.5px;top:579px;font-size:13px;line-height:15px;color:#3a3a3a;transform:translateX(-50%);will-change:transform;">-3500</div>
<div class="t" style="left:536.7857142857143px;top:579px;font-size:13px;line-height:15px;color:#3a3a3a;transform:translateX(-50%);will-change:transform;">-3000</div>
<div class="t" style="left:622.0714285714286px;top:579px;font-size:13px;line-height:15px;color:#3a3a3a;transform:translateX(-50%);will-change:transform;">-2500</div>
<div class="t" style="left:707.3571428571429px;top:579px;font-size:13px;line-height:15px;color:#3a3a3a;transform:translateX(-50%);will-change:transform;">-2000</div>
<div class="t" style="left:792.6428571428571px;top:579px;font-size:13px;line-height:15px;color:#3a3a3a;transform:translateX(-50%);will-change:transform;">-1500</div>
<div class="t" style="left:877.9285714285714px;top:579px;font-size:13px;line-height:15px;color:#3a3a3a;transform:translateX(-50%);will-change:transform;">-1000</div>
<div class="t" style="left:963.2142857142858px;top:579px;font-size:13px;line-height:15px;color:#3a3a3a;transform:translateX(-50%);will-change:transform;">-500</div>
<div class="t" style="left:1048.5px;top:579px;font-size:13px;line-height:15px;color:#3a3a3a;transform:translateX(-50%);will-change:transform;">0</div>
<div class="t" style="left:750px;top:596px;font-size:14.5px;line-height:16px;color:#3a3a3a;transform:translateX(-50%);will-change:transform;">Shapley value</div>
<div class="t" style="left:387px;top:432px;font-size:14.5px;line-height:16px;color:#3a3a3a;transform:translate(-50%,-50%) rotate(-90deg);">Predictor</div>
<div class="t" style="left:776.5px;top:640px;font-size:12px;line-height:14px;color:#000;transform:translateX(-100%);">Query point prediction</div>
<div class="t" style="left:834px;top:640px;font-size:12px;line-height:14px;color:#000;transform:translateX(-100%);">3858.07</div>
<div class="t" style="left:776.5px;top:658px;font-size:12px;line-height:14px;color:#000;transform:translateX(-100%);">Average model prediction</div>
<div class="t" style="left:834px;top:658px;font-size:12px;line-height:14px;color:#000;transform:translateX(-100%);">12854.09</div>
<div class="a" style="left:1283px;top:198px;width:22px;height:21px;background:#f5f5f5;border:1px solid #8a8a8a;border-radius:5px;box-sizing:border-box"></div>
<svg class="a" style="left:1283px;top:198px;" width="22" height="21" viewBox="0 0 22 21"><defs><linearGradient id="bl" x1="0" y1="0" x2="0" y2="1"><stop offset="0" stop-color="#d8ebf8"/><stop offset="1" stop-color="#5a9ad0"/></linearGradient></defs><path d="M9 3 H13 V8.5 H18 V12.5 H13 V18 H9 V12.5 H4 V8.5 H9 Z" fill="url(#bl)" stroke="#2a5a8a" stroke-width="0.8"/></svg>
<div class="a" style="left:1310px;top:198px;width:22px;height:21px;background:#f5f5f5;border:1px solid #8a8a8a;border-radius:5px;box-sizing:border-box"></div>
<svg class="a" style="left:1310px;top:198px;" width="22" height="21" viewBox="0 0 22 21"><defs><linearGradient id="bl2" x1="0" y1="0" x2="0" y2="1"><stop offset="0" stop-color="#d8ebf8"/><stop offset="1" stop-color="#5a9ad0"/></linearGradient></defs><rect x="3.5" y="8.3" width="15" height="4.4" fill="url(#bl2)" stroke="#2a5a8a" stroke-width="0.8"/></svg>
<div class="a" style="left:1342px;top:198px;width:22px;height:21px;background:#f5f5f5;border:1px solid #8a8a8a;border-radius:5px;box-sizing:border-box"></div>
<svg class="a" style="left:1342px;top:198px;" width="22" height="21" viewBox="0 0 22 21"><defs><linearGradient id="bl3" x1="0" y1="0" x2="0" y2="1"><stop offset="0" stop-color="#d8ebf8"/><stop offset="1" stop-color="#5a9ad0"/></linearGradient></defs><path d="M3 8.5 H9 V4.5 L14.5 10.5 L9 16.5 V12.5 H3 Z" fill="url(#bl3)" stroke="#2a5a8a" stroke-width="0.8"/><rect x="15.5" y="4" width="2.5" height="13" fill="url(#bl3)" stroke="#2a5a8a" stroke-width="0.8"/></svg>
<div class="a" style="left:1125px;top:221px;width:236px;height:462px;border-left:1px solid #8a8a8a;border-top:1px solid #8a8a8a;box-sizing:border-box;background:#f0f0f0"></div>
<div class="t" style="left:1131.3px;top:225px;font-size:12px;line-height:14px;color:#000;font-weight:bold;">Data</div>
<svg class="a" style="left:1132px;top:253px;" width="14" height="14" viewBox="0 0 14 14"><circle cx="7" cy="7" r="6.3" fill="#fff" stroke="#555" stroke-width="1"/></svg>
<div class="t" style="left:1149.5px;top:252px;font-size:12px;line-height:14px;color:#000;">Training set</div>
<svg class="a" style="left:1132px;top:274px;" width="14" height="14" viewBox="0 0 14 14"><circle cx="7" cy="7" r="6.3" fill="#fff" stroke="#555" stroke-width="1"/><circle cx="7" cy="7" r="3.2" fill="#222"/></svg>
<div class="t" style="left:1149.5px;top:274px;font-size:12px;line-height:14px;color:#000;">Test set</div>
<div class="a" style="left:1133px;top:298px;width:14px;height:14px;background:#fff;border:1px solid #3a8ee6;box-sizing:border-box"></div>
<div class="t" style="left:1149.5px;top:298px;font-size:12px;line-height:14px;color:#000;">Show query points</div>
<div class="t" style="left:1131px;top:325px;font-size:12px;line-height:14px;color:#000;font-weight:bold;">Query Point</div>
<svg class="a" style="left:1131.5px;top:351.7px;" width="14" height="14" viewBox="0 0 14 14"><circle cx="7" cy="7" r="6.3" fill="#fff" stroke="#555" stroke-width="1"/><circle cx="7" cy="7" r="3.2" fill="#222"/></svg>
<div class="t" style="left:1148.5px;top:352px;font-size:12px;line-height:14px;color:#000;">Data set index</div>
<svg class="a" style="left:1131.5px;top:373.5px;" width="14" height="14" viewBox="0 0 14 14"><circle cx="7" cy="7" r="6.3" fill="#fff" stroke="#555" stroke-width="1"/></svg>
<div class="t" style="left:1148.5px;top:374px;font-size:12px;line-height:14px;color:#000;">What-if analysis</div>
<div class="a" style="left:1252px;top:345px;width:108px;height:22px;background:#f0f0f0;border:1px solid #808080;border-radius:0 7px 7px 0;box-sizing:border-box"></div>
<div class="a" style="left:1253px;top:346px;width:85px;height:20px;background:#fff"></div>
<div class="a" style="left:1338px;top:345px;width:1px;height:22px;background:#808080"></div>
<div class="a" style="left:1339px;top:356px;width:20px;height:1px;background:#808080"></div>
<svg class="a" style="left:1345px;top:349px;" width="8" height="4" viewBox="0 0 8 4"><path d="M0 4 H8 L4 0 Z" fill="#606060"/></svg>
<svg class="a" style="left:1345px;top:360px;" width="8" height="4" viewBox="0 0 8 4"><path d="M0 0 H8 L4 4 Z" fill="#c0c0c0"/></svg>
<div class="t" style="left:1335.5px;top:349px;font-size:12px;line-height:14px;color:#000;transform:translateX(-100%);">1</div>
<svg class="a" style="left:1131px;top:408px;" width="5" height="8" viewBox="0 0 5 8"><path d="M0 0 L4 4 L0 8 Z" fill="#666"/></svg>
<div class="t" style="left:1140px;top:405px;font-size:12px;line-height:14px;color:#000;font-weight:bold;">Shapley Options</div>
<svg class="a" style="left:1131px;top:431px;" width="7" height="5" viewBox="0 0 7 5"><path d="M0 0 H7 L3.5 4 Z" fill="#666"/></svg>
<div class="t" style="left:1140px;top:427px;font-size:12px;line-height:14px;color:#000;font-weight:bold;">Shapley Plot</div>
<div class="t" style="left:1139px;top:449px;font-size:12px;line-height:14px;color:#000;">Show top N predictors</div>
<div class="a" style="left:1264px;top:446px;width:96px;height:21px;background:#f0f0f0;border:1px solid #808080;border-radius:0 7px 7px 0;box-sizing:border-box"></div>
<div class="a" style="left:1265px;top:447px;width:73px;height:19px;background:#fff"></div>
<div class="a" style="left:1338px;top:446px;width:1px;height:21px;background:#808080"></div>
<div class="a" style="left:1339px;top:456px;width:20px;height:1px;background:#808080"></div>
<svg class="a" style="left:1345px;top:450px;" width="8" height="4" viewBox="0 0 8 4"><path d="M0 4 H8 L4 0 Z" fill="#c0c0c0"/></svg>
<svg class="a" style="left:1345px;top:460px;" width="8" height="4" viewBox="0 0 8 4"><path d="M0 0 H8 L4 4 Z" fill="#606060"/></svg>
<div class="t" style="left:1335.5px;top:450px;font-size:12px;line-height:14px;color:#000;transform:translateX(-100%);">6</div>
<div class="t" style="left:1131px;top:479px;font-size:12px;line-height:14px;color:#1a62c8;font-weight:bold;text-decoration:underline;">How to use local Shapley explanations</div>
</body></html>
